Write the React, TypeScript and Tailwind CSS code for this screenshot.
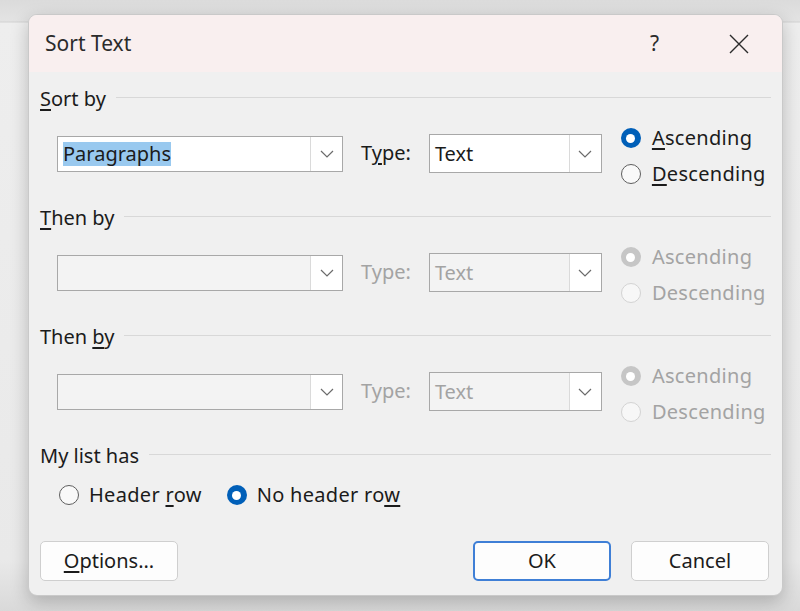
import React from "react";

const dark = "text-[#1b1b1b]";
const dim = "text-[#a3a3a3]";

function Radio({ checked, disabled }: { checked?: boolean; disabled?: boolean }) {
    if (checked) {
        return (
            <span className={`w-5 h-5 shrink-0 rounded-full flex items-center justify-center ${disabled ? "bg-[#c6c6c6]" : "bg-[#005fb8]"}`}>
                <span className="w-[9px] h-[9px] rounded-full bg-white" />
            </span>
        );
    }
    return <span className={`w-5 h-5 shrink-0 rounded-full border ${disabled ? "border-[#d3d3d3] bg-[#f7f7f7]" : "border-[#5e5e5e] bg-[#f9f9f9]"}`} />;
}

function Chevron() {
    return (
        <svg width="14" height="8" viewBox="0 0 14 8" fill="none">
            <path d="M1 1 L7 7 L13 1" stroke="#6b6b6b" strokeWidth="1.2" />
        </svg>
    );
}

interface DropdownProps {
    width: string;
    value?: string;
    disabled?: boolean;
    selected?: boolean;
    height: string;
}

function Dropdown({ width, value, disabled, selected, height }: DropdownProps) {
    return (
        <div className={`${width} ${height} flex border border-[#a8a8a8] ${disabled ? "bg-[#f3f3f3]" : "bg-white"}`}>
            <div className="flex-1 flex items-center pl-[5px]">
                {value && (
                    <span className={`leading-[24px] ${selected ? "bg-[#99c9ef] " + dark : disabled ? dim : dark}`}>{value}</span>
                )}
            </div>
            <div className="w-[32px] flex items-center justify-center bg-white border-l border-[#dadada]">
                <Chevron />
            </div>
        </div>
    );
}

function SectionHeader({ children }: { children: React.ReactNode }) {
    return (
        <div className="h-[24px] flex items-center gap-[10px]">
            <span className={`leading-[24px] ${dark}`}>{children}</span>
            <div className="flex-1 h-px bg-[#d8d8d8] -mt-[3px]" />
        </div>
    );
}

function SortRow({ disabled, first }: { disabled?: boolean; first?: boolean }) {
    const tc = disabled ? dim : dark;
    return (
        <div className="h-[72px] flex items-start pl-[17px] mt-[9px]">
            <div className="mt-[16px]">
                <Dropdown width="w-[286px]" height="h-[36px]" value={first ? "Paragraphs" : undefined} selected={first} disabled={disabled} />
            </div>
            <span className={`ml-[18px] mt-[21px] leading-[24px] ${tc}`}>
                {first ? (
                    <>
                        T<u className="underline-offset-[3px]">y</u>pe:
                    </>
                ) : (
                    "Type:"
                )}
            </span>
            <div className="ml-[18px] mt-[14px]">
                <Dropdown width="w-[173px]" height="h-[39px]" value="Text" disabled={disabled} />
            </div>
            <div className="ml-[19px] flex flex-col tracking-[0.3px]">
                <div className="h-[36px] flex items-center gap-[11px]">
                    <Radio checked disabled={disabled} />
                    <span className={`leading-[24px] ${tc}`}>
                        {first ? (
                            <>
                                <u className="underline-offset-[3px]">A</u>scending
                            </>
                        ) : (
                            "Ascending"
                        )}
                    </span>
                </div>
                <div className="h-[36px] flex items-center gap-[11px]">
                    <Radio disabled={disabled} />
                    <span className={`leading-[24px] ${tc}`}>
                        {first ? (
                            <>
                                <u className="underline-offset-[3px]">D</u>escending
                            </>
                        ) : (
                            "Descending"
                        )}
                    </span>
                </div>
            </div>
        </div>
    );
}

function Button({ children, primary }: { children: React.ReactNode; primary?: boolean }) {
    return (
        <div
            className={`w-[138px] h-[40px] rounded-[5px] bg-[#fdfdfd] flex items-center justify-center leading-[24px] ${dark} ${
                primary ? "border-2 border-[#3f7fd6]" : "border border-[#cfcfcf]"
            }`}
        >
            {children}
        </div>
    );
}

export default function App() {
    return (
        <div className="w-[800px] h-[611px] overflow-hidden pt-[14px] pl-[28px] bg-[linear-gradient(to_bottom,#dbdbdb_0px,#e3e3e3_21px,#d2d2d2_22px,#eeeeee_23px,#e9e9e9_560px,#d9d9d9_611px)] font-['Noto_Sans',sans-serif] text-[20px]">
            <div className="w-[755px] h-[582px] rounded-[9px] border border-[#c9c9c9] bg-[#f0f0f0] overflow-hidden flex flex-col shadow-[0_6px_18px_rgba(0,0,0,0.22)]">
                {/* Title bar */}
                <div className="h-[57px] shrink-0 bg-[#f9efef] flex items-center pl-[16px]">
                    <span className="text-[21px] text-[#2b2b2b] leading-[28px] flex-1 -mt-[2px]">Sort Text</span>
                    <span className="text-[21px] text-[#2b2b2b] leading-[28px] mr-[70px] -mt-[2px]">?</span>
                    <svg width="20" height="20" viewBox="0 0 20 20" className="mr-[33px]">
                        <path d="M1 1 L19 19 M19 1 L1 19" stroke="#2b2b2b" strokeWidth="1.4" />
                    </svg>
                </div>

                {/* Body */}
                <div className="flex-1 flex flex-col pl-[11px] pr-[11px] pt-[15px]">
                    <SectionHeader>
                        <u className="underline-offset-[3px]">S</u>ort by
                    </SectionHeader>
                    <SortRow first />

                    <div className="mt-[14px]">
                        <SectionHeader>
                            <u className="underline-offset-[3px]">T</u>hen by
                        </SectionHeader>
                    </div>
                    <SortRow disabled />

                    <div className="mt-[14px]">
                        <SectionHeader>
                            Then <u className="underline-offset-[3px]">b</u>y
                        </SectionHeader>
                    </div>
                    <SortRow disabled />

                    <div className="mt-[14px]">
                        <SectionHeader>My list has</SectionHeader>
                    </div>
                    <div className="h-[24px] mt-[15px] pl-[19px] flex items-center tracking-[0.3px]">
                        <Radio />
                        <span className={`ml-[10px] leading-[24px] ${dark}`}>
                            Header <u className="underline-offset-[3px]">r</u>ow
                        </span>
                        <span className="ml-[25px]">
                            <Radio checked />
                        </span>
                        <span className={`ml-[10px] leading-[24px] ${dark}`}>
                            No header ro<u className="underline-offset-[3px]">w</u>
                        </span>
                    </div>

                    <div className="mt-[34px] flex items-center pr-[2px]">
                        <Button>
                            <span>
                                <u className="underline-offset-[3px]">O</u>ptions...
                            </span>
                        </Button>
                        <div className="flex-1" />
                        <Button primary>OK</Button>
                        <div className="w-[20px]" />
                        <Button>Cancel</Button>
                    </div>
                </div>
            </div>
        </div>
    );
}
